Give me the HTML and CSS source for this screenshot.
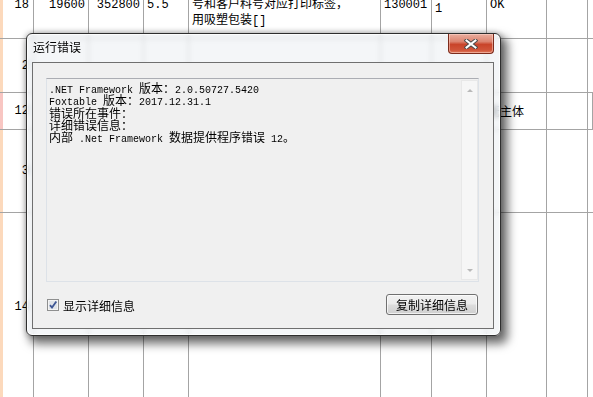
FILE: index.html
```html
<!DOCTYPE html>
<html><head>
<meta charset="utf-8">
<title>运行错误</title>
<link rel="stylesheet" href="styles.css">
</head>
<body>
<div class="sheet">
	<div class="row r1">
		<div class="c strip"></div>
		<div class="c num first">18</div>
		<div class="c num">19600</div>
		<div class="c num">352800</div>
		<div class="c">5.5</div>
		<div class="c">号和客户料号对应打印标签，<br>用吸塑包装[]</div>
		<div class="c">130001</div>
		<div class="c tight">1111111<br>1</div>
		<div class="c">OK</div>
		<div class="c"></div>
		<div class="c"></div>
	</div>
	<div class="row r2">
		<div class="c strip"></div>
		<div class="c num first">2</div>
		<div class="c"></div><div class="c"></div><div class="c"></div><div class="c"></div>
		<div class="c"></div><div class="c"></div><div class="c"></div><div class="c"></div><div class="c"></div>
	</div>
	<div class="row r3">
		<div class="c strip pink"></div>
		<div class="c num first">12</div>
		<div class="c"></div><div class="c"></div><div class="c"></div><div class="c"></div>
		<div class="c"></div><div class="c"></div>
		<div class="c">无主体</div>
		<div class="c"></div><div class="c"></div>
	</div>
	<div class="row r4">
		<div class="c strip"></div>
		<div class="c num first">3</div>
		<div class="c"></div><div class="c"></div><div class="c"></div><div class="c"></div>
		<div class="c"></div><div class="c"></div><div class="c"></div><div class="c"></div><div class="c"></div>
	</div>
	<div class="row r5">
		<div class="c strip"></div>
		<div class="c num first">14</div>
		<div class="c"></div><div class="c"></div><div class="c"></div><div class="c"></div>
		<div class="c"></div><div class="c"></div><div class="c"></div><div class="c"></div><div class="c"></div>
	</div>
</div>

<div class="dialog">
	<div class="caption">运行错误</div>
	<div class="close">
		<svg width="14" height="10" viewBox="0 0 14 10">
			<path d="M2.5 1.5 L11.5 8.5 M11.5 1.5 L2.5 8.5" stroke="#4a4a4a" stroke-width="4" stroke-linecap="square"/>
			<path d="M2.5 1.5 L11.5 8.5 M11.5 1.5 L2.5 8.5" stroke="#fff" stroke-width="2" stroke-linecap="square"/>
		</svg>
	</div>
	<div class="client">
		<div class="textbox">
			<div class="log">
				<div>.NET Framework <span class="cjk">版本：</span>2.0.50727.5420</div>
				<div>Foxtable <span class="cjk">版本：</span>2017.12.31.1</div>
				<div><span class="cjk">错误所在事件：</span></div>
				<div><span class="cjk">详细错误信息：</span></div>
				<div><span class="cjk">内部</span> .Net Framework <span class="cjk">数据提供程序错误</span> 12<span class="cjk">。</span></div>
			</div>
			<div class="vscroll">
				<span class="arrow up"></span>
				<span class="arrow down"></span>
			</div>
		</div>
		<div class="actions">
			<label class="check">
				<span class="box">
					<svg width="12" height="12" viewBox="0 0 12 12">
						<rect x="0.5" y="0.5" width="11" height="11" fill="#f4f4f4" stroke="#8e8f8f"/>
						<rect x="2" y="2" width="8" height="8" fill="#dfe3e8"/>
						<path d="M3 6.2 L5 8.6 L9.3 2.6" fill="none" stroke="#3e5694" stroke-width="1.8"/>
					</svg>
				</span>
				显示详细信息
			</label>
			<div class="btn">复制详细信息</div>
		</div>
	</div>
</div>
</body>
</html>
```

FILE: styles.css
```css
html, body { margin: 0; height: 397px; overflow: hidden; background: #fff; }
body { font-family: "Liberation Mono", "Noto Sans CJK SC", monospace; font-size: 12px; color: #000; }

/* таблица на фоне */
.sheet { margin-top: -5px; }
.row {
	display: grid;
	grid-template-columns: 3px 31px 55px 55px 45px 192px 51px 55px 60px 41px 1fr;
}
.row .c {
	box-sizing: border-box;
	border-right: 1px solid #a4a4a4;
	border-bottom: 1px solid #a4a4a4;
	padding: 0 3px;
	display: flex;
	align-items: center;
	white-space: nowrap;
	overflow: hidden;
	font-family: "Liberation Mono", "Noto Sans CJK SC", monospace;
}
.row .strip { background: #fcd9bc; border-right: none; padding: 0; }
.row .strip.pink { background: #f8c6c2; }
.row .num { justify-content: flex-end; }
.row .first { padding-right: 4px; }
.r1 { height: 44px; }
.r1 .c { align-items: flex-start; padding-top: 2px; line-height: 16px; }
.r1 .tight { line-height: 12px; margin-top: -4px; padding-top: 0; }
.r2 { height: 54px; }
.r3 { height: 37px; }
.r3 .c { padding-left: 1px; }
.r4 { height: 83px; }
.r5 { height: 188px; }

/* окно ошибки */
.dialog {
	position: absolute;
	left: 26px;
	top: 33px;
	width: 475px;
	height: 303px;
	box-sizing: border-box;
	padding: 0 6px 6px 5px;
	border: 1px solid #2e2e2e;
	border-radius: 6px;
	background: rgba(238, 241, 244, 0.62);
	backdrop-filter: blur(2.5px);
	box-shadow: inset 0 0 0 1px rgba(255,255,255,0.8), 5px 6px 10px 2px rgba(0,0,0,0.55), 0 0 6px rgba(0,0,0,0.3);
	font-family: "Noto Sans CJK SC", "Liberation Sans", sans-serif;
}
.caption {
	height: 28px;
	line-height: 26px;
	padding-left: 1px;
	font-size: 12px;
}
.close {
	position: absolute;
	top: 0;
	right: 6px;
	width: 46px;
	height: 20px;
	box-sizing: border-box;
	border: 1px solid #7c2b1c;
	border-top: none;
	border-radius: 0 0 4px 4px;
	background: linear-gradient(#eaae9f 0%, #dc8470 40%, #c9442a 55%, #d0553a 85%, #e07a5c 100%);
	box-shadow: inset 0 0 0 1px rgba(255,220,210,0.5);
	display: flex;
	align-items: center;
	justify-content: center;
}
.client {
	box-sizing: border-box;
	height: 267px;
	border: 1px solid #6f6f6f;
	background: #f0f0f0;
	padding: 15px 14px 13px 13px;
}
.textbox {
	height: 204px;
	box-sizing: border-box;
	border: 1px solid #dde2e8;
	border-top-color: #abadb3;
	display: flex;
}
.log {
	flex: 1;
	padding: 3px 0 0 2px;
	font-family: "Liberation Mono", monospace;
	font-size: 10px;
}
.log div { height: 12.25px; line-height: 12px; white-space: nowrap; }
.log .cjk { font-family: "Noto Sans CJK SC", sans-serif; font-size: 12px; line-height: 12px; }
.vscroll {
	width: 17px;
	margin: 1px 0;
	box-sizing: border-box;
	border: 1px solid #e8e8e8;
	background: #f6f6f6;
	display: flex;
	flex-direction: column;
	justify-content: space-between;
	align-items: center;
	padding: 8px 0 7px;
}
.arrow {
	width: 0; height: 0;
	border-left: 3.5px solid transparent;
	border-right: 3.5px solid transparent;
}
.arrow.up { border-bottom: 3px solid #b9b9b9; }
.arrow.down { border-top: 3px solid #b9b9b9; }
.actions {
	margin-top: 12px;
	height: 21px;
	display: flex;
	justify-content: space-between;
	align-items: center;
	padding: 0 1px;
}
.check {
	display: flex;
	align-items: center;
	gap: 4px;
	font-size: 12px;
	margin-top: 1px;
}
.check .box { display: block; width: 12px; height: 12px; }
.check svg { display: block; }
.btn {
	width: 92px;
	height: 21px;
	box-sizing: border-box;
	border: 1px solid #707070;
	border-radius: 3px;
	background: linear-gradient(#f2f2f2 0%, #ebebeb 48%, #dddddd 52%, #cfcfcf 100%);
	box-shadow: inset 0 0 0 1px rgba(255,255,255,0.7);
	font-size: 12px;
	line-height: 19px;
	text-align: center;
}
```
